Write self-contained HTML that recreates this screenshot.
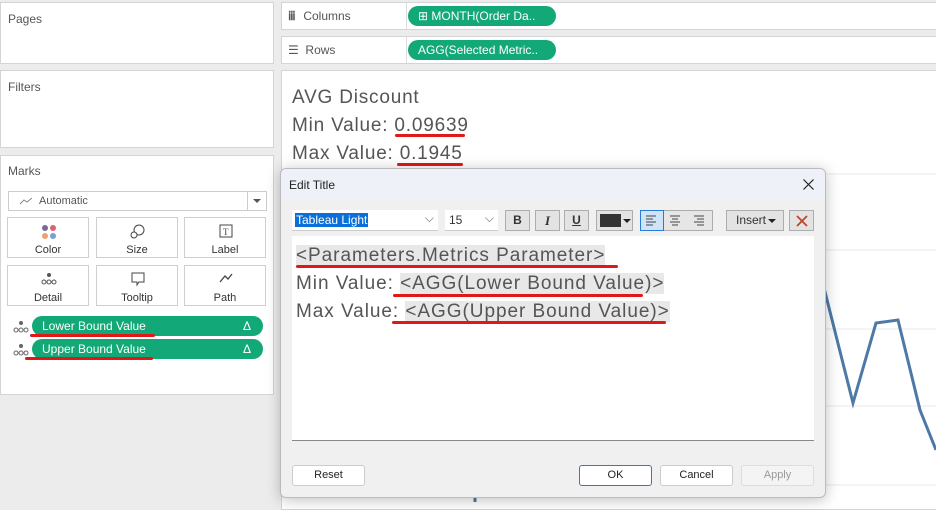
<!DOCTYPE html>
<html><head><style>
*{box-sizing:border-box;margin:0;padding:0}
body{width:936px;height:502px;background:#ececec;font-family:"Liberation Sans",sans-serif;position:relative;overflow:hidden;color:#333}
.abs{position:absolute}
.panel{position:absolute;background:#fff;border:1px solid #d4d4d4}
.lbl{font-size:12px;color:#555}
.pill{position:absolute;background:#13a878;color:#fff;font-size:12px;border-radius:10px;height:20px;line-height:20px;padding-left:10px}
.card{position:absolute;background:#fff;border:1px solid #cfcfcf;width:82px;height:41px;text-align:center;font-size:11px;color:#333}
.card span{position:absolute;left:0;right:0;bottom:1px}
.red{position:absolute;height:3px;background:#e01818;border-radius:2px}
.btn{position:absolute;height:21px;border:1px solid #ccc;background:#fff;border-radius:3px;font-size:11px;text-align:center;line-height:19px;color:#222}
.tb{position:absolute;top:210px;height:21px;border:1px solid #adadad;background:#e3e3e3}
.hl{background:#e8e8e8}
</style></head><body>
<div class="panel" style="left:0;top:2px;width:274px;height:62px"><div class="lbl abs" style="left:7px;top:9px">Pages</div></div>
<div class="panel" style="left:0;top:70px;width:274px;height:78px"><div class="lbl abs" style="left:7px;top:9px">Filters</div></div>
<div class="panel" style="left:0;top:155px;width:274px;height:240px">
<div class="lbl abs" style="left:7px;top:8px">Marks</div>
<div class="abs" style="left:7px;top:35px;width:259px;height:20px;border:1px solid #ccc;background:#fff;font-size:11px;color:#555;line-height:18px;padding-left:30px">Automatic
<svg class="abs" style="left:10px;top:4px" width="14" height="10"><path d="M1 8 L5 4 L8 6 L13 2" stroke="#888" fill="none"/></svg>
<div class="abs" style="right:0;top:0;width:19px;height:18px;border-left:1px solid #ccc"><div class="abs" style="left:5px;top:7px;border:4px solid transparent;border-top:4px solid #555"></div></div></div>
</div>
<div class="card" style="left:7px;top:217px"><svg class="abs" style="left:33px;top:6px" width="16" height="16"><circle cx="4" cy="4" r="3" fill="#7b6799"/><circle cx="12" cy="4" r="3" fill="#e06070"/><circle cx="4" cy="12" r="3" fill="#f0a070"/><circle cx="12" cy="12" r="3" fill="#7aa0d0"/></svg><span>Color</span></div>
<div class="card" style="left:96px;top:217px"><svg class="abs" style="left:33px;top:5px" width="16" height="16"><circle cx="9" cy="7" r="5" stroke="#444" fill="none"/><circle cx="4" cy="12" r="3" stroke="#444" fill="#fff"/></svg><span>Size</span></div>
<div class="card" style="left:184px;top:217px"><svg class="abs" style="left:33px;top:5px" width="16" height="16"><rect x="2" y="2" width="12" height="12" stroke="#444" fill="none"/><text x="5" y="12" font-size="9" font-family="Liberation Serif" fill="#444">T</text></svg><span>Label</span></div>
<div class="card" style="left:7px;top:265px"><svg class="abs" style="left:33px;top:6px" width="16" height="14"><circle cx="8" cy="3" r="2" fill="#555"/><circle cx="3" cy="10" r="2" stroke="#555" fill="none"/><circle cx="8" cy="10" r="2" stroke="#555" fill="none"/><circle cx="13" cy="10" r="2" stroke="#555" fill="none"/></svg><span>Detail</span></div>
<div class="card" style="left:96px;top:265px"><svg class="abs" style="left:33px;top:5px" width="16" height="16"><path d="M2 2 H14 V11 H9 L7 14 V11 H2 Z" stroke="#444" fill="none"/></svg><span>Tooltip</span></div>
<div class="card" style="left:184px;top:265px"><svg class="abs" style="left:33px;top:6px" width="16" height="12"><path d="M2 10 L7 4 L10 7 L14 2" stroke="#444" fill="none" stroke-width="1.3"/></svg><span>Path</span></div>
<svg class="abs" style="left:13px;top:320px" width="16" height="14"><circle cx="8" cy="3" r="2" fill="#666"/><circle cx="3" cy="10" r="2" stroke="#666" fill="none"/><circle cx="8" cy="10" r="2" stroke="#666" fill="none"/><circle cx="13" cy="10" r="2" stroke="#666" fill="none"/></svg>
<svg class="abs" style="left:13px;top:343px" width="16" height="14"><circle cx="8" cy="3" r="2" fill="#666"/><circle cx="3" cy="10" r="2" stroke="#666" fill="none"/><circle cx="8" cy="10" r="2" stroke="#666" fill="none"/><circle cx="13" cy="10" r="2" stroke="#666" fill="none"/></svg>
<div class="pill" style="left:32px;top:316px;width:231px">Lower Bound Value<span class="abs" style="right:12px">Δ</span></div>
<div class="pill" style="left:32px;top:339px;width:231px">Upper Bound Value<span class="abs" style="right:12px">Δ</span></div>
<div class="red" style="left:30px;top:334px;width:125px"></div>
<div class="red" style="left:25px;top:357px;width:128px"></div>
<div class="panel" style="left:281px;top:2px;width:660px;height:28px"><div class="abs" style="left:124px;top:0;bottom:0;border-left:1px solid #ddd"></div><div class="abs" style="left:6px;top:6px;font-size:12px;color:#555"><b style="letter-spacing:1px">ⅲ</b>&nbsp; Columns</div></div>
<div class="panel" style="left:281px;top:36px;width:660px;height:28px"><div class="abs" style="left:124px;top:0;bottom:0;border-left:1px solid #ddd"></div><div class="abs" style="left:6px;top:6px;font-size:12px;color:#555">☰&nbsp; Rows</div></div>
<div class="pill" style="left:408px;top:6px;width:148px">⊞ MONTH(Order Da..</div>
<div class="pill" style="left:408px;top:40px;width:148px">AGG(Selected Metric..</div>
<div class="panel" style="left:281px;top:70px;width:660px;height:440px"></div>
<div class="abs" style="left:292px;top:84px;font-size:19px;color:#555;line-height:28px;letter-spacing:0.8px">AVG Discount<br>Min Value: 0.09639<br>Max Value: 0.1945</div>
<div class="red" style="left:395px;top:134px;width:70px"></div>
<div class="red" style="left:397px;top:163px;width:66px"></div>
<svg class="abs" style="left:282px;top:160px" width="654" height="342">
<g stroke="#e8e8e8"><line x1="0" y1="14" x2="654" y2="14"/><line x1="0" y1="90" x2="654" y2="90"/><line x1="0" y1="169" x2="654" y2="169"/><line x1="0" y1="246" x2="654" y2="246"/><line x1="0" y1="325" x2="654" y2="325"/></g>
<path d="M540 120 L571 243 L594 163 L616 160 L638 250 L654 290" stroke="#4e79a7" stroke-width="3" fill="none"/>
<path d="M193 330 L193 342" stroke="#4e79a7" stroke-width="3"/>
</svg>
<div class="abs" style="left:280px;top:168px;width:546px;height:330px;background:#f0f0f0;border:1px solid #bbb;border-radius:6px;box-shadow:0 2px 14px rgba(0,0,0,.25);overflow:hidden">
<div class="abs" style="left:0;top:0;right:0;height:31px;background:#eef1f8"></div>
<div class="abs" style="left:8px;top:9px;font-size:12px;color:#222">Edit Title</div>
<svg class="abs" style="right:11px;top:10px" width="11" height="11"><path d="M0.5 0.5L10.5 10.5M10.5 0.5L0.5 10.5" stroke="#222" stroke-width="1.2"/></svg>
</div>
<div class="abs" style="left:292px;top:210px;width:146px;height:21px;background:#fff;border-bottom:1px solid #ccc"><span class="abs" style="left:3px;top:3px;font-size:12px;background:#0a6fd8;color:#fff;padding:0 1px">Tableau Light</span><span class="abs" style="right:4px;top:1px;font-size:12px;color:#666">⌵</span></div>
<div class="abs" style="left:445px;top:210px;width:53px;height:21px;background:#fff;border-bottom:1px solid #ccc"><span class="abs" style="left:4px;top:3px;font-size:12px">15</span><span class="abs" style="right:4px;top:1px;font-size:12px;color:#666">⌵</span></div>
<div class="tb" style="left:505px;width:25px;font-weight:bold;font-size:12px;text-align:center;line-height:19px">B</div>
<div class="tb" style="left:535px;width:25px;font-style:italic;font-weight:bold;font-family:'Liberation Serif';font-size:13px;text-align:center;line-height:19px">I</div>
<div class="tb" style="left:564px;width:25px;text-decoration:underline;font-weight:bold;font-size:12px;text-align:center;line-height:19px">U</div>
<div class="tb" style="left:596px;width:37px"><div class="abs" style="left:3px;top:3px;width:21px;height:13px;background:#333"></div><div class="abs" style="left:26px;top:8px;border:4px solid transparent;border-top:4px solid #222"></div></div>
<div class="tb" style="left:640px;width:73px;background:#e6e6e6"></div>
<div class="abs" style="left:640px;top:210px;width:24px;height:21px;background:#cfe4f8;border:1px solid #2a7ad8"></div>
<svg class="abs" style="left:645px;top:214px" width="66" height="12" stroke="#444"><path d="M1 2H11M1 5H8M1 8H11M1 11H8"/><path d="M25 2H35M27 5H33M25 8H35M27 11H33"/><path d="M49 2H59M52 5H59M49 8H59M52 11H59"/></svg>
<div class="tb" style="left:726px;width:58px;font-size:12px;line-height:19px;padding-left:9px">Insert<span class="abs" style="right:7px;top:8px;border:4px solid transparent;border-top:4px solid #222"></span></div>
<div class="tb" style="left:789px;width:25px"><svg class="abs" style="left:6px;top:4px" width="12" height="12"><path d="M1 1L11 11M11 1L1 11" stroke="#c0452a" stroke-width="1.8"/></svg></div>
<div class="abs" style="left:292px;top:236px;width:522px;height:205px;background:#fff;border-bottom:1px solid #888"></div>
<div class="abs" style="left:296px;top:242px;font-size:19px;line-height:28px;color:#555;white-space:nowrap;letter-spacing:0.95px">
<span class="hl">&lt;Parameters.Metrics Parameter&gt;</span><br>Min Value: <span class="hl">&lt;AGG(Lower Bound Value)&gt;</span><br>Max Value: <span class="hl">&lt;AGG(Upper Bound Value)&gt;</span></div>
<div class="red" style="left:296px;top:265px;width:322px"></div>
<div class="red" style="left:393px;top:294px;width:250px"></div>
<div class="red" style="left:392px;top:321px;width:274px"></div>
<div class="btn" style="left:292px;top:465px;width:73px">Reset</div>
<div class="btn" style="left:579px;top:465px;width:73px;border-color:#2a7ad8">OK</div>
<div class="btn" style="left:660px;top:465px;width:73px">Cancel</div>
<div class="btn" style="left:741px;top:465px;width:73px;color:#999;background:#f4f4f4;border-color:#ddd">Apply</div>
</body></html>
